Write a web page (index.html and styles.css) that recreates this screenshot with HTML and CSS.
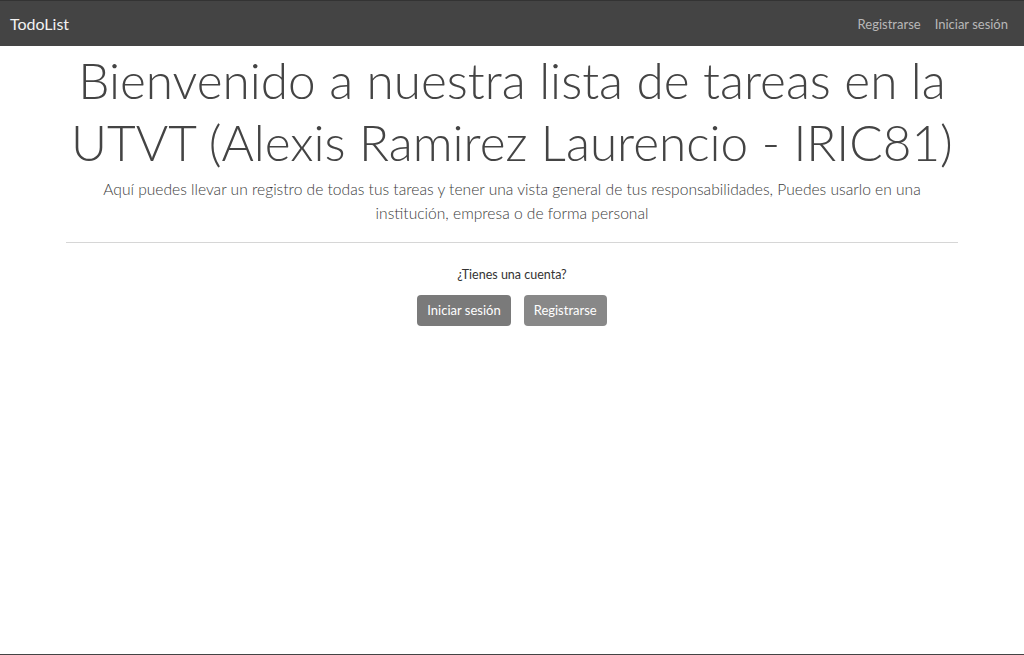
FILE: index.html
```html
<!DOCTYPE html>
<html lang="es">
<head>
<meta charset="utf-8">
<title>TodoList</title>
<link rel="stylesheet" href="styles.css">
</head>
<body>
<div class="frame">
  <nav class="navbar">
    <a class="brand" href="#">TodoList</a>
    <div class="nav-links">
      <a class="nav-link" href="#">Registrarse</a>
      <a class="nav-link" href="#">Iniciar sesión</a>
    </div>
  </nav>
  <main class="hero">
    <h1 class="display">Bienvenido a nuestra lista de tareas en la UTVT (Alexis Ramirez Laurencio - IRIC81)</h1>
    <p class="lead">Aquí puedes llevar un registro de todas tus tareas y tener una vista general de tus responsabilidades, Puedes usarlo en una institución, empresa o de forma personal</p>
    <hr class="divider">
    <p class="question">¿Tienes una cuenta?</p>
    <div class="actions">
      <a class="btn" href="#">Iniciar sesión</a>
      <a class="btn" href="#">Registrarse</a>
    </div>
  </main>
</div>
</body>
</html>
```
FILE: styles.css
```css
* { box-sizing: border-box; }
html, body { margin: 0; padding: 0; }
body {
  font-family: "Lato", "Open Sans", "Liberation Sans", sans-serif;
  color: #444;
  background: #fff;
}
.frame {
  height: 655px;
  border-top: 1px solid #333;
  border-bottom: 1px solid #444;
  display: flex;
  flex-direction: column;
}
.navbar {
  height: 45px;
  flex: none;
  background: #444;
  display: flex;
  align-items: center;
  justify-content: space-between;
  padding: 0 16px 0 10px;
}
.brand {
  color: #f2f2f2;
  text-decoration: none;
  font-size: 16px;
}
.nav-links { display: flex; gap: 14px; }
.nav-link {
  color: #b8b8b8;
  text-decoration: none;
  font-size: 13px;
}
.hero {
  width: 892px;
  margin: 0 auto;
  text-align: center;
}
.display {
  font-size: 49.5px;
  font-weight: 300;
  line-height: 62px;
  margin: 3px -22px 4px;
  color: #444;
}
.lead {
  font-size: 15.6px;
  font-weight: 300;
  line-height: 24px;
  margin: 0 10px 17px;
  color: #3c3c3c;
}
.divider {
  border: 0;
  border-top: 1px solid #d6d6d6;
  margin: 0 0 24px;
}
.question {
  font-size: 12.5px;
  margin: 0 0 13px;
  color: #333;
}
.actions {
  display: flex;
  justify-content: center;
  gap: 13px;
}
.btn {
  display: inline-block;
  background: #7a7a7a;
  color: #fff;
  text-decoration: none;
  font-size: 13px;
  height: 31px;
  padding: 7px 10px;
  border-radius: 4px;
  line-height: 17px;
}
.btn + .btn { background: #888; }
```
